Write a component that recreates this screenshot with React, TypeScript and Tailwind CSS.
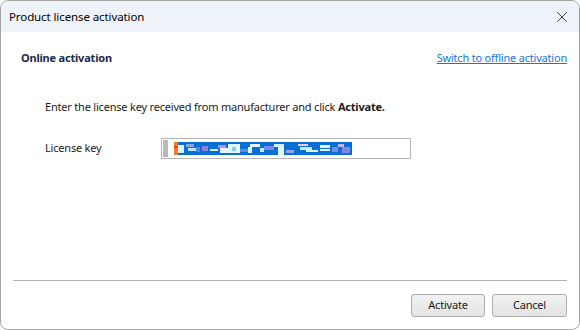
import { X } from "lucide-react";

// scrambled key selection pattern: [x, y, w, h, colour]
const blocks: [number, number, number, number, string][] = [
  [0, 0, 4, 13, "#f47a20"],
  [0, 4, 4, 2, "#e04a10"],
  [4, 3, 6, 8, "#d8f4f4"],
  [12, 2, 8, 3, "#8fa0e6"],
  [14, 6, 8, 3, "#b8e4f8"],
  [22, 5, 4, 5, "#5a7fe0"],
  [28, 4, 6, 5, "#8a84e0"],
  [36, 7, 8, 2, "#dcefff"],
  [44, 3, 8, 3, "#b890e0"],
  [46, 6, 8, 5, "#e8f6ff"],
  [54, 2, 12, 9, "#dff7f7"],
  [58, 5, 4, 4, "#7fd4f0"],
  [66, 7, 8, 3, "#5e8ae8"],
  [76, 2, 10, 3, "#e8f6ff"],
  [74, 5, 4, 6, "#e8f6ff"],
  [86, 6, 4, 4, "#bfeaff"],
  [90, 4, 10, 4, "#7a8ce6"],
  [100, 2, 10, 3, "#d8f0f0"],
  [104, 5, 6, 8, "#dff7f7"],
  [112, 8, 8, 3, "#9aa6ec"],
  [124, 2, 10, 2, "#f0c8f0"],
  [126, 5, 12, 3, "#bfeaff"],
  [132, 8, 12, 2, "#e0f4ff"],
  [146, 3, 10, 3, "#e8f6ff"],
  [146, 7, 10, 2, "#dff7f7"],
  [158, 5, 6, 5, "#7a8ce6"],
  [164, 2, 6, 3, "#c8b0f0"],
  [168, 5, 8, 6, "#8a84e0"],
];

function KeySelection() {
  return (
    <svg width="178" height="13" viewBox="0 0 178 13" className="block">
      <rect x="0" y="0" width="178" height="13" fill="#0a6fd4" />
      {blocks.map(([x, y, w, h, c], i) => (
        <rect key={i} x={x} y={y} width={w} height={h} fill={c} />
      ))}
    </svg>
  );
}

export default function App() {
  return (
    <div
      className="w-[580px] h-[330px] bg-white border border-[#a3a3a3] rounded-lg overflow-hidden flex flex-col text-[11px] tracking-[-0.2px] text-[#1b1b1b]"
      style={{ fontFamily: '"Noto Sans", "Liberation Sans", sans-serif' }}
    >
      {/* title bar */}
      <div className="h-[31px] shrink-0 bg-[#eef3f9] flex items-center justify-between pl-[8px] pr-[8px]">
        <span className="text-[11.5px] tracking-[-0.1px] text-black">Product license activation</span>
        <X size={18} strokeWidth={1} className="text-black" />
      </div>

      {/* body */}
      <div className="flex-1 flex flex-col px-[12px]">
        <div className="flex items-center justify-between h-[20px] mt-[16px] pl-[8px]">
          <span className="font-bold text-[#1c2a4e]">Online activation</span>
          <a href="#" className="text-[#1976d2] underline">
            Switch to offline activation
          </a>
        </div>

        <div className="mt-[29px] pl-[32px] h-[20px] flex items-center">
          Enter the license key received from manufacturer and click&nbsp;
          <span className="font-bold">Activate.</span>
        </div>

        <div className="mt-[21px] pl-[32px] flex items-center">
          <span className="w-[116px]">License key</span>
          <div className="w-[250px] h-[21px] border border-[#b4b4b4] flex items-center pl-[1px]">
            <div className="w-[5px] h-[17px] bg-[#b9b9b9]" />
            <div className="ml-[6px]">
              <KeySelection />
            </div>
          </div>
        </div>

        <div className="flex-1" />
        <div className="h-px bg-[#b0b0b0]" />

        <div className="h-[48px] flex items-center justify-end gap-[7px]">
          <button className="w-[74px] h-[23px] rounded-[3px] border border-[#acacac] bg-gradient-to-b from-[#f2f2f2] to-[#e3e3e3] text-[#1b1b1b]">
            Activate
          </button>
          <button className="w-[75px] h-[23px] rounded-[3px] border border-[#acacac] bg-gradient-to-b from-[#f2f2f2] to-[#e3e3e3] text-[#1b1b1b]">
            Cancel
          </button>
        </div>
      </div>
    </div>
  );
}
